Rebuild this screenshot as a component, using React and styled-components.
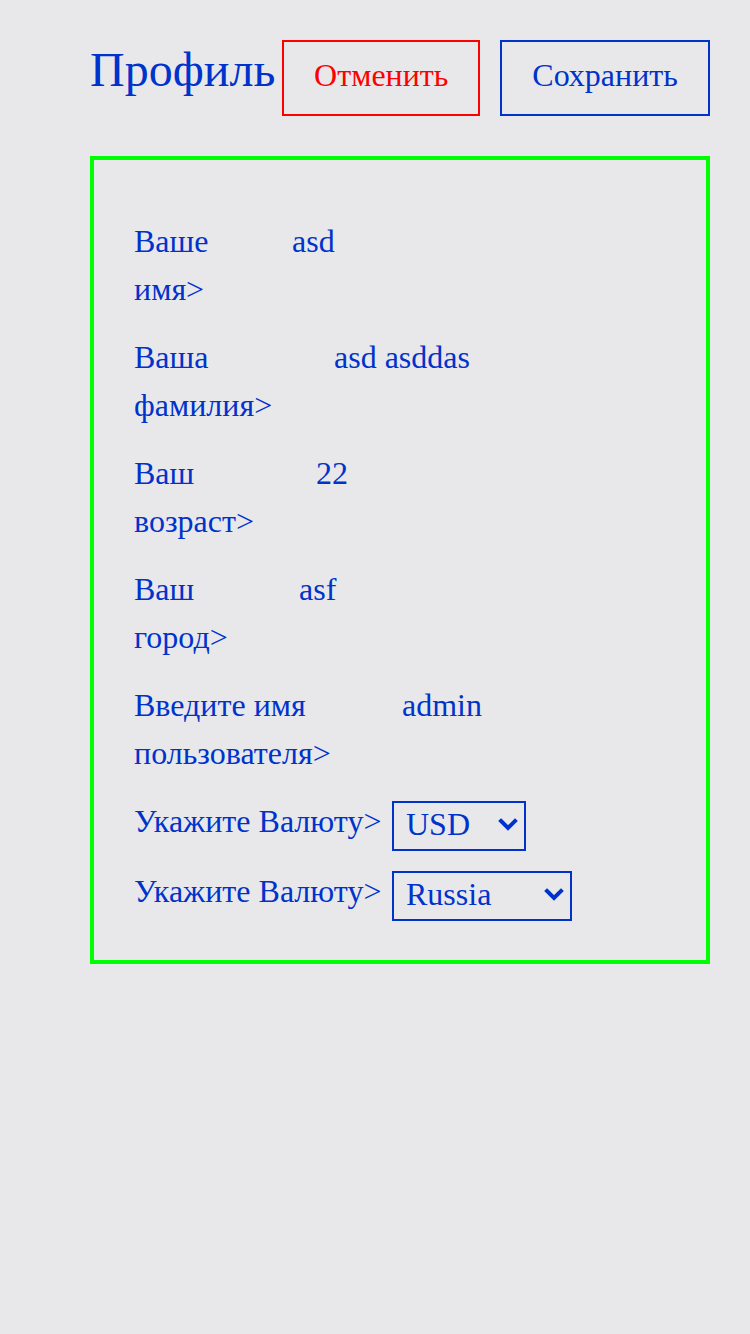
import React from 'react';
import styled, { createGlobalStyle } from 'styled-components';

const Global = createGlobalStyle`
  html, body {
    margin: 0;
    padding: 0;
    background: #e8e8ea;
  }
  body {
    font-family: "Liberation Serif", "Times New Roman", serif;
    color: #0033cc;
    min-height: 1334px;
  }
`;

const Page = styled.div`
  padding: 40px 40px 0 90px;
  width: 620px;
`;

const Header = styled.div`
  display: flex;
  align-items: flex-start;
  margin-bottom: 40px;
`;

const Title = styled.h1`
  margin: 2px 7px 0 0;
  font-size: 48px;
  font-weight: normal;
  line-height: 55px;
  color: #0033cc;
`;

const Button = styled.button`
  width: ${p => p.$w}px;
  height: 76px;
  padding: 0 0 5px 0;
  margin-left: ${p => p.$gap || 0}px;
  background: transparent;
  border: 2px solid ${p => p.$color};
  color: ${p => p.$color};
  font-family: "Liberation Serif", serif;
  font-size: 32px;
  cursor: pointer;
`;

const Card = styled.div`
  border: 4px solid #00ff00;
  padding: 57px 40px 43px 40px;
  display: flex;
  flex-direction: column;
  gap: 20px;
`;

const Row = styled.div`
  display: flex;
  align-items: flex-start;
  font-size: 32px;
  line-height: 48px;
`;

const Label = styled.label`
  width: ${p => p.$w}px;
  flex-shrink: 0;
  white-space: ${p => (p.$nowrap ? 'nowrap' : 'normal')};
  padding-right: ${p => p.$pr || 0}px;
  box-sizing: border-box;
`;

const LabelText = styled.span`
  display: inline-block;
  max-width: ${p => p.$max}px;
`;

const Value = styled.span`
  white-space: nowrap;
`;

const SelectWrap = styled.div`
  position: relative;
  margin: 3px 0 -3px 0;
  width: ${p => p.$w}px;
  height: 50px;
`;

const Select = styled.select`
  appearance: none;
  -webkit-appearance: none;
  width: 100%;
  height: 100%;
  border: 2px solid #0033cc;
  border-radius: 0;
  background: transparent;
  color: #0033cc;
  font-family: "Liberation Serif", serif;
  font-size: 32px;
  padding: 0 0 3px 12px;
  outline: none;
`;

const Chevron = styled.svg`
  position: absolute;
  right: 8px;
  top: 18px;
  width: 20px;
  height: 14px;
  pointer-events: none;
`;

const fields = [
  { label: 'Ваше имя>', value: 'asd', w: 158, max: 100 },
  { label: 'Ваша фамилия>', value: 'asd asddas', w: 200, max: 150 },
  { label: 'Ваш возраст>', value: '22', w: 182, max: 140 },
  { label: 'Ваш город>', value: 'asf', w: 165, max: 110 },
  { label: 'Введите имя пользователя>', value: 'admin', w: 268, max: 210 },
];

function Dropdown({ w, value, options }) {
  return (
    <SelectWrap $w={w}>
      <Select defaultValue={value}>
        {options.map(o => <option key={o}>{o}</option>)}
      </Select>
      <Chevron viewBox="0 0 20 14">
        <path d="M3 3 L10 10 L17 3" fill="none" stroke="#0033cc" strokeWidth="4" strokeLinecap="square" />
      </Chevron>
    </SelectWrap>
  );
}

export default function App() {
  return (
    <>
      <Global />
      <Page>
        <Header>
          <Title>Профиль</Title>
          <Button $color="#ff0000" $w={198}>Отменить</Button>
          <Button $color="#0033cc" $w={210} $gap={20}>Сохранить</Button>
        </Header>
        <Card>
          {fields.map(f => (
            <Row key={f.label}>
              <Label $w={f.w}>
                <LabelText $max={f.max}>{f.label}</LabelText>
              </Label>
              <Value>{f.value}</Value>
            </Row>
          ))}
          <Row>
            <Label $w={258} $nowrap $pr={11}>Укажите Валюту&gt;</Label>
            <Dropdown w={134} value="USD" options={['USD', 'EUR', 'RUB']} />
          </Row>
          <Row>
            <Label $w={258} $nowrap $pr={11}>Укажите Валюту&gt;</Label>
            <Dropdown w={180} value="Russia" options={['Russia', 'USA', 'Germany']} />
          </Row>
        </Card>
      </Page>
    </>
  );
}
